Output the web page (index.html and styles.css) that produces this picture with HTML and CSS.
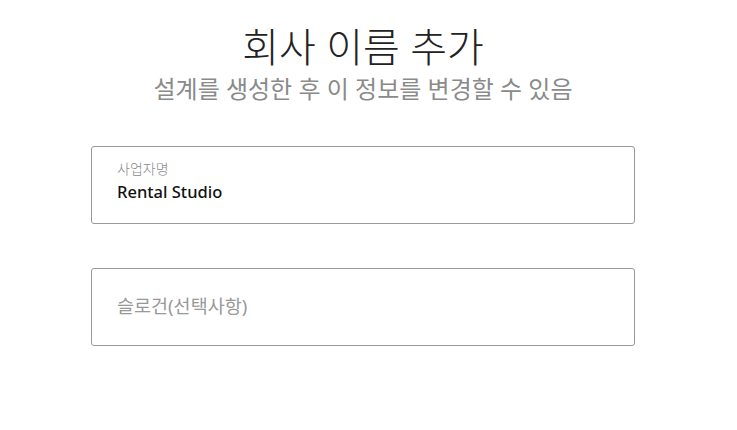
FILE: index.html
```html
<!DOCTYPE html>
<html>
<head>
  <title>회사 이름 추가</title>
  <link rel="stylesheet" href="styles.css">
</head>
<body>
  <div class="page">
    <h1 class="title">회사 이름 추가</h1>
    <p class="subtitle">설계를 생성한 후 이 정보를 변경할 수 있음</p>

    <form class="form">
      <label class="field filled">
        <span class="field-label">사업자명</span>
        <input type="text" value="Rental Studio">
      </label>
      <label class="field">
        <input type="text" placeholder="슬로건(선택사항)">
      </label>
    </form>
  </div>
</body>
</html>
```

FILE: styles.css
```css
body { margin: 0; background: #fff; font-family: "Noto Sans", "Noto Sans CJK KR", sans-serif; color: #222; }
.page { display: flex; flex-direction: column; align-items: center; padding: 22px 11px 0 0; }
.title { margin: 0; font-size: 40px; font-weight: 300; line-height: 50px; color: #222; }
.subtitle { margin: 0; font-size: 24px; font-weight: 400; line-height: 34px; color: #8a8a8a; }
.form { display: flex; flex-direction: column; gap: 44px; margin-top: 40px; width: 544px; }
.field { display: flex; flex-direction: column; justify-content: center; height: 78px; box-sizing: border-box; padding: 0 25px; border: 1px solid #999; border-radius: 3px; }
.field-label { font-size: 14px; color: #8c8c8c; line-height: 18px; font-weight: 300; }
.field input { border: none; outline: none; padding: 0; font-family: inherit; font-size: 16.5px; line-height: 22px; font-weight: 500; color: #111; background: none; }
.field input::placeholder { color: #999; font-size: 18.5px; font-weight: 400; }
.filled { justify-content: flex-start; padding-top: 13px; }
.filled input { margin-top: 3px; }
```
